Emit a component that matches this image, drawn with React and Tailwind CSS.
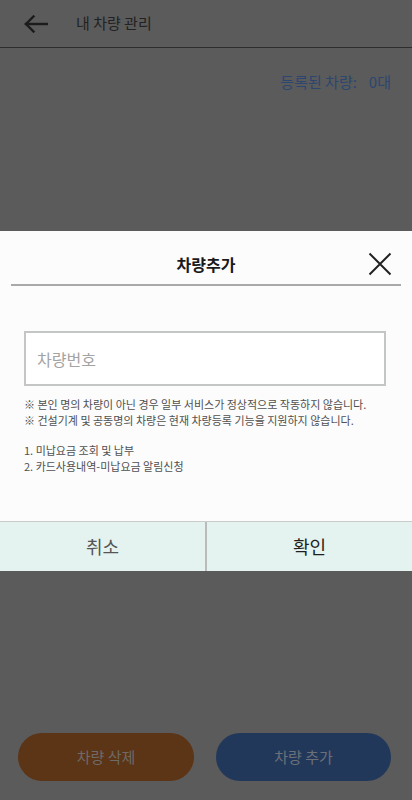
import React from "react";

const font = { fontFamily: '"Noto Sans CJK KR", "Noto Sans", sans-serif' };

const BackArrow = () => (
  <svg width="24" height="18" viewBox="0 0 24 18" fill="none" stroke="#1c1c1c" strokeWidth="2.4" strokeLinecap="square">
    <path d="M2 9h21" />
    <path d="M9.5 1.5L2 9l7.5 7.5" />
  </svg>
);

const CloseIcon = () => (
  <svg width="24" height="24" viewBox="0 0 24 24" fill="none" stroke="#222" strokeWidth="2">
    <path d="M1.5 1.5l21 21M22.5 1.5l-21 21" />
  </svg>
);

const Page = () => (
  <div className="flex min-h-[800px] flex-col bg-[#5b5b5b]">
    <header className="flex h-[48px] items-center border-b border-[#2e2e2e] pl-[24px]">
      <BackArrow />
      <h1 className="ml-[28px] text-[15px] text-[#222]">내 차량 관리</h1>
    </header>
    <div className="flex justify-end gap-[12px] pr-[21px] pt-[23px] text-[15px] text-[#2b476f]">
      <span>등록된 차량:</span>
      <span>0대</span>
    </div>
    <div className="flex-1" />
    <div className="flex gap-[22px] px-[18px] pb-[19px]">
      <button className="h-[48px] w-[176px] rounded-full bg-[#5c3416] text-[15px] text-[#6e6b68]">
        차량 삭제
      </button>
      <button className="h-[48px] w-[175px] rounded-full bg-[#22385a] text-[15px] text-[#6c7079]">
        차량 추가
      </button>
    </div>
  </div>
);

const AddCarModal = () => (
  <div className="fixed inset-0 flex items-center pt-[2px]">
    <div className="w-full bg-[#fcfcfc]">
      <div className="relative mx-[11px] flex h-[55px] items-end justify-center border-b-2 border-[#a9a9a9] pb-[8px]">
        <h2 className="text-[16px] font-bold leading-[24px] text-[#1a1a1a]">차량추가</h2>
        <button className="absolute right-[9px] top-[21px]">
          <CloseIcon />
        </button>
      </div>
      <div className="px-[24px] pt-[45px]">
        <input
          className="h-[55px] w-[362px] border-2 border-[#c4c6c6] bg-white px-[11px] text-[16px] text-[#333] placeholder:text-[#a3a3a3] focus:outline-none"
          placeholder="차량번호"
          style={font}
        />
        <div className="mt-[10px] text-[11px] leading-[16px] text-[#505050]">
          <p>※ 본인 명의 차량이 아닌 경우 일부 서비스가 정상적으로 작동하지 않습니다.</p>
          <p>※ 건설기계 및 공동명의 차량은 현재 차량등록 기능을 지원하지 않습니다.</p>
        </div>
        <ol className="mt-[14px] text-[11px] leading-[16px] text-[#505050]">
          <li>1. 미납요금 조회 및 납부</li>
          <li>2. 카드사용내역-미납요금 알림신청</li>
        </ol>
      </div>
      <div className="mt-[47px] flex h-[50px] border-t border-[#c9cccb] bg-[#e5f3f0]">
        <button className="flex-1 text-[18px] text-[#555]">취소</button>
        <div className="w-[2px] bg-[#b9bcbb]" />
        <button className="flex-1 text-[18px] text-[#1f1f1f]">확인</button>
      </div>
    </div>
  </div>
);

export default function App() {
  return (
    <div className="relative" style={font}>
      <Page />
      <AddCarModal />
    </div>
  );
}
